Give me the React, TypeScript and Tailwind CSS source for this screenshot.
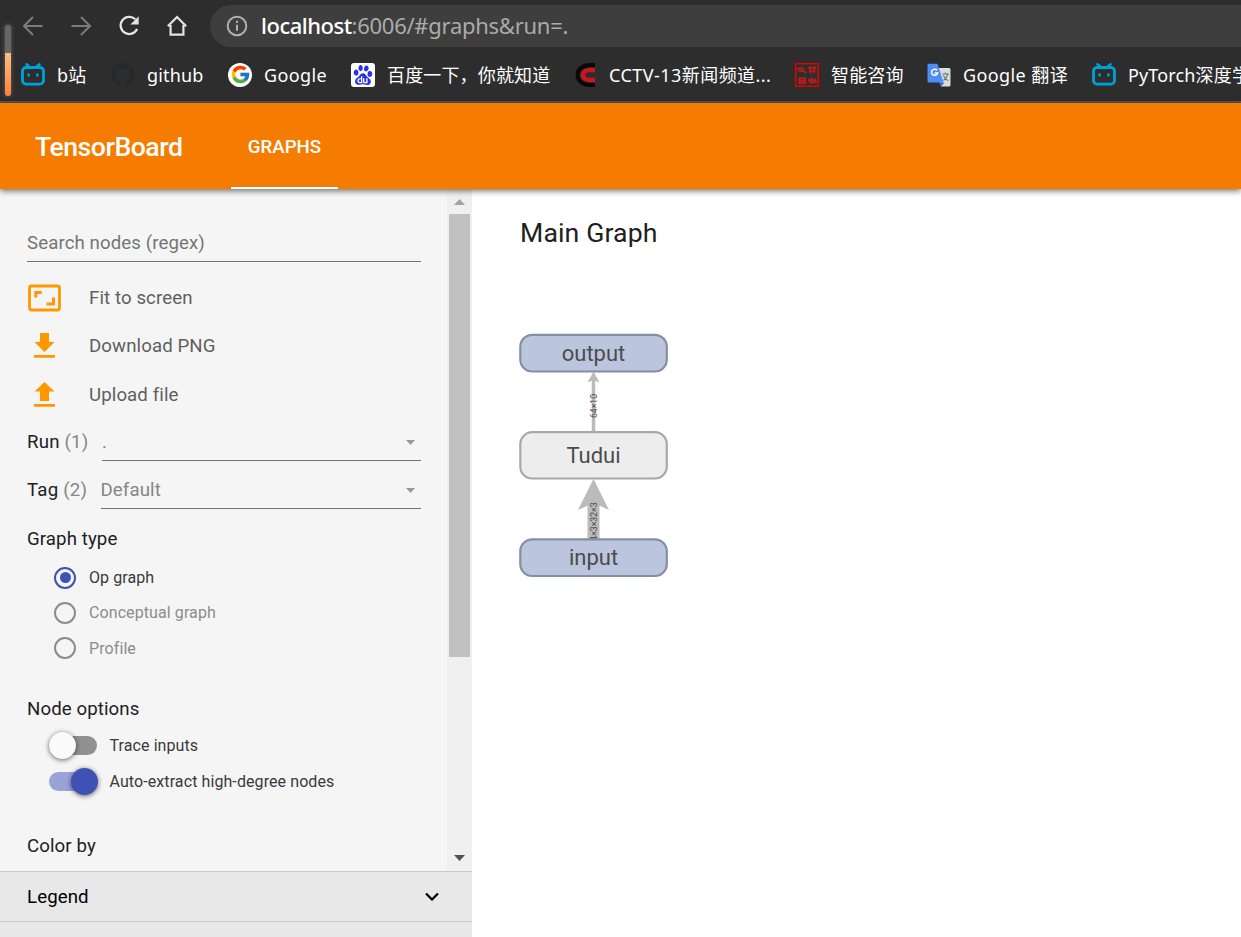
import React from 'react';
import { FaGithub } from 'react-icons/fa';
import { FcGoogle } from 'react-icons/fc';
import { SiBaidu } from 'react-icons/si';

function BilibiliIcon() {
  return (
    <svg width="24" height="24" viewBox="0 0 24 24" fill="none" stroke="#00a1d6" strokeWidth="2.800" strokeLinecap="round">
      <rect x="1.500" y="4.500" width="21" height="16.600" rx="3.600" />
      <path d="M5.500 1.300l3.500 3M18.500 1.300l-3.500 3M7.600 11.400v1.200M16.400 11.400v1.200" strokeWidth="2.500" />
    </svg>
  );
}

function CctvIcon() {
  return (
    <svg width="24" height="24" viewBox="0 0 24 24" fill="none">
      <path d="M21 2.200C12 1 3.600 4 3.600 12s8.400 11 17.400 9.800" stroke="#080808" strokeWidth="4" />
      <path d="M21 7.200h-5.500C11.500 7.200 9 9 9 12s2.500 4.800 6.500 4.800H21" stroke="#d4141c" strokeWidth="4.200" />
    </svg>
  );
}

function SealIcon() {
  return (
    <svg width="24" height="24" viewBox="0 0 24 24" fill="none">
      <rect x=".7" y=".7" width="22.600" height="22.600" stroke="#e60000" strokeWidth="1.400" />
      <g stroke="#d01818" strokeWidth="1.900" opacity=".8">
        <path d="M4 4.500l-1.500 2.500M4 5.500h5M3.500 8h5.500l2.200 2.500M13 5h8.500M15 3v4M19.500 3v4M14 8h6.500M16 8v2.800M19.500 8v2.500" />
        <path d="M3.500 15.300h7.500M3.500 18h7.500M4.200 14.500v6M7.200 14.500v6M10.300 14.500v6M3.500 20.200h7.500M12.800 17h9M14 19.300h8M17 14.500v6.300M14.800 15.500v4M20 15.500v4" />
      </g>
    </svg>
  );
}

function TranslateIcon() {
  return (
    <svg width="24" height="24" viewBox="0 0 24 24" fill="none">
      <path d="M10 5h12a1.500 1.500 0 0 1 1.500 1.500v15.500a1.500 1.500 0 0 1-1.500 1.500h-8z" fill="#dcdcdc" />
      <path d="M12 19.500h5.500L14 23.500z" fill="#3367d6" />
      <path d="M2 .8h8.500L16.500 19.500H2A1.500 1.500 0 0 1 .5 18V2.300A1.500 1.500 0 0 1 2 .8z" fill="#4f8df5" />
      <path d="M10 7.200a3.100 3.100 0 1 0 .7 2.700H7.600" stroke="#fff" strokeWidth="1.500" />
      <path d="M15 11h7M18.500 9.500V11M20.800 11c-.8 3-2.300 5-4.300 6.500M16.300 12.500c.8 2 2.500 4 4.900 5.300" stroke="#607988" strokeWidth="1.100" />
    </svg>
  );
}

function Bookmark({ icon, label, className }: { icon: React.ReactNode; label: string; className: string }) {
  return (
    <div className={`flex shrink-0 items-center gap-3 ${className}`}>
      <span className="flex size-6 shrink-0 items-center justify-center">{icon}</span>
      <span className="whitespace-nowrap leading-6">{label}</span>
    </div>
  );
}

function BrowserChrome() {
  return (
    <div className="relative h-[103px] border-b-2 border-[#555] bg-[#2d2d2d] font-['Noto_Sans','Noto_Sans_CJK_SC',sans-serif] text-white">
      <div className="absolute left-[5px] top-[25px] flex h-[71px] w-[6px] flex-col overflow-hidden rounded-full bg-[#666] shadow-[0_0_4px_#666]">
        <div className="mt-[28px] grow bg-linear-to-b from-[#fdc080] to-[#ff7f38]" />
      </div>
      <div className="flex h-[52px] items-center pl-[21px]">
        <svg width="24" height="24" viewBox="0 0 24 24" fill="none" stroke="#7c7c7c" strokeWidth="2">
          <path d="M21.500 12H3.500M12 3L3 12l9 9" />
        </svg>
        <svg className="ml-6" width="24" height="24" viewBox="0 0 24 24" fill="none" stroke="#7c7c7c" strokeWidth="2">
          <path d="M2.500 12h18M12 3l9 9-9 9" />
        </svg>
        <svg className="ml-6" width="24" height="24" viewBox="0 0 24 24" fill="none" stroke="#e4e4e4" strokeWidth="2.300">
          <path d="M18.300 5.300A8.600 8.600 0 1 0 20.100 15" />
          <path d="M21.700 2.200v8.300h-8.300z" fill="#e4e4e4" stroke="none" />
        </svg>
        <svg className="ml-6" width="24" height="24" viewBox="0 0 24 24" fill="none" stroke="#e4e4e4" strokeWidth="2.200">
          <path d="M2.800 12.300L12 3l9.200 9.300M5.600 11v9.600h12.800V11" />
        </svg>
        <div className="ml-[21px] flex h-[42px] grow items-center rounded-l-full bg-[#3e3e3e] pl-4">
          <svg width="22" height="22" viewBox="0 0 22 22" fill="none" stroke="#b0b0b0" strokeWidth="2">
            <circle cx="11" cy="11" r="9.300" />
            <path d="M11 9.800v6M11 5.800v2.300" />
          </svg>
          <span className="ml-[13px] pb-[2px] text-[22px] leading-none tracking-[-0.27px] text-[#ababab]">
            <span className="font-medium tracking-[-0.5px] text-white">localhost</span>:6006/#graphs&amp;run=.
          </span>
        </div>
      </div>
      <div className="flex h-[45px] items-center overflow-hidden pl-[21px] text-[18px] tracking-[0.15px]">
        <Bookmark className="w-[90px]" icon={<BilibiliIcon />} label="b站" />
        <Bookmark className="w-[117px]" icon={<FaGithub size={24} color="#24292e" />} label="github" />
        <Bookmark
          className="w-[123px] tracking-[0.4px]"
          icon={
            <span className="flex size-6 items-center justify-center rounded-full bg-white">
              <FcGoogle size={21} />
            </span>
          }
          label="Google"
        />
        <Bookmark
          className="w-[223px]"
          icon={
            <span className="flex size-6 items-center justify-center rounded-[3px] bg-white">
              <SiBaidu size={20} color="#2932e1" />
            </span>
          }
          label="百度一下，你就知道"
        />
        <Bookmark className="w-[221px] gap-[11px] tracking-[0.45px]" icon={<CctvIcon />} label="CCTV-13新闻频道..." />
        <Bookmark className="w-[132px]" icon={<SealIcon />} label="智能咨询" />
        <Bookmark className="w-[165px] tracking-[0.4px]" icon={<TranslateIcon />} label="Google 翻译" />
        <Bookmark className="w-[200px]" icon={<BilibiliIcon />} label="PyTorch深度学习" />
      </div>
    </div>
  );
}

function Toolbar() {
  return (
    <header className="relative z-10 flex h-[86px] bg-[#f57c00] text-white shadow-[0_2px_6px_rgba(0,0,0,0.55)]">
      <h1 className="ml-[35px] flex w-[196px] items-center pt-[2px] text-[26.67px] font-medium tracking-[-0.5px]">TensorBoard</h1>
      <div className="flex w-[107px] items-center justify-center border-b-2 border-white pt-[3px] text-[18.67px] font-medium">GRAPHS</div>
    </header>
  );
}

function ActionRow({ icon, label, className }: { icon: React.ReactNode; label: string; className: string }) {
  return (
    <div className={`flex items-center text-[18.67px] text-[#5f5f5f] ${className}`}>
      <span className="flex w-[62px]">{icon}</span>
      {label}
    </div>
  );
}

function Select({ value, className }: { value: string; className: string }) {
  return (
    <div className={`flex grow items-center justify-between self-start border-b border-[#737373] pr-[6px] text-[#868686] ${className}`}>
      <span>{value}</span>
      <svg width="9" height="5" viewBox="0 0 9 5">
        <path d="M0 0h9L4.500 5z" fill="#999" />
      </svg>
    </div>
  );
}

function Radio({ label, checked }: { label: string; checked?: boolean }) {
  return (
    <div className={`flex h-[35.33px] items-center pl-[27px] text-[16px] ${checked ? 'text-[#3a3a3a]' : 'text-[#8c8c8c]'}`}>
      <span className={`mr-[13px] flex size-[22px] items-center justify-center rounded-full border-2 ${checked ? 'border-[#3f51b5]' : 'border-[#8c8c8c]'}`}>
        {checked && <span className="size-[11px] rounded-full bg-[#3f51b5]" />}
      </span>
      <span className={checked ? '' : 'pt-[1px]'}>{label}</span>
    </div>
  );
}

function Toggle({ label, on }: { label: string; on?: boolean }) {
  return (
    <div className="flex h-9 items-center pl-[22px] text-[16px] text-[#3a3a3a]">
      <span className={`mr-[12.5px] flex h-[19px] w-12 items-center rounded-full ${on ? 'justify-end bg-[#9aa3d8]' : 'bg-[#919191]'}`}>
        <span
          className={`size-[27px] shrink-0 rounded-full shadow-[0_1px_5px_rgba(0,0,0,0.6)] ${on ? '-mr-[1px] bg-[#3f51b5]' : 'bg-[#fafafa]'}`}
        />
      </span>
      {label}
    </div>
  );
}

function Sidebar() {
  return (
    <aside className="flex w-[472px] flex-col bg-[#f5f5f5]">
      <div className="flex h-[682px]">
        <div className="flex w-[447px] flex-col pl-[27px] pr-[26px] text-[18.67px] tracking-[0.09px] text-[#212121]">
          <div className="flex h-[73px] items-end border-b border-[#737373] pb-[4px] text-[#757575]">Search nodes (regex)</div>
          <div className="h-[11px]" />
          <ActionRow
            className="h-12 pt-[1px]"
            label="Fit to screen"
            icon={
              <svg width="34" height="28" viewBox="0 0 34 28" fill="none" stroke="#ff9800">
                <rect x="2.500" y="2" width="30" height="24" rx="2" strokeWidth="2.800" />
                <path d="M8.800 13.500V8.500h6M26.500 13.500V20h-7" strokeWidth="3" />
              </svg>
            }
          />
          <ActionRow
            className="h-[49px]"
            label="Download PNG"
            icon={
              <svg className="ml-[7px]" width="21" height="26" viewBox="0 0 21 26" fill="#ff9800">
                <path d="M6 0h9v9h5.500L10.500 19 .500 9H6zM0 22h21v2.700H0z" />
              </svg>
            }
          />
          <ActionRow
            className="h-12 pt-[1px]"
            label="Upload file"
            icon={
              <svg className="ml-[7px]" width="21" height="26" viewBox="0 0 21 26" fill="#ff9800">
                <path d="M6 19h9v-9.500h5.500L10.500 0 .500 9.500H6zM0 22h21v2.700H0z" />
              </svg>
            }
          />
          <div className="flex h-[46px] items-center pt-[2px]">
            <span className="w-[75px] shrink-0 tracking-[0.2px]">
              Run <span className="text-[#868686]">(1)</span>
            </span>
            <Select value="." className="-mt-[2px] h-[43px] pt-[6px]" />
          </div>
          <div className="flex h-[50px] items-center pt-[1px]">
            <span className="w-[73.5px] shrink-0 tracking-[0.2px]">
              Tag <span className="text-[#868686]">(2)</span>
            </span>
            <Select value="Default" className="-mt-[1px] h-[45px] pt-[8px]" />
          </div>
          <div className="flex h-[46px] items-center pt-[4px]">Graph type</div>
          <Radio label="Op graph" checked />
          <Radio label="Conceptual graph" />
          <Radio label="Profile" />
          <div className="mt-[25px] flex h-9 items-center">Node options</div>
          <div className="h-[1px]" />
          <Toggle label="Trace inputs" />
          <Toggle label="Auto-extract high-degree nodes" on />
          <div className="mt-7 flex h-9 items-center">Color by</div>
        </div>
        <div className="flex w-[25px] flex-col items-center bg-[#f0f0f0]">
          <svg className="mt-[10px] shrink-0" width="11" height="6" viewBox="0 0 11 6">
            <path d="M0 6h11L5.500 0z" fill="#a3a3a3" />
          </svg>
          <div className="mt-[9px] h-[443px] w-[21px] bg-[#c1c1c1]" />
          <svg className="mb-[10px] mt-auto shrink-0" width="11" height="6" viewBox="0 0 11 6">
            <path d="M0 0h11L5.500 6z" fill="#505050" />
          </svg>
        </div>
      </div>
      <div className="flex h-[51px] items-center justify-between border-y border-[#c9c9c9] bg-[#e8e8e8] pl-[27px] pr-[33px] text-[18.67px] tracking-[0.1px] text-black">
        Legend
        <svg width="14" height="9" viewBox="0 0 14 9" fill="none" stroke="#000" strokeWidth="2.200">
          <path d="M1 1.500l6 6 6-6" />
        </svg>
      </div>
      <div className="grow bg-[#e8e8e8]" />
    </aside>
  );
}

function GraphCanvas() {
  return (
    <svg width="200" height="260" viewBox="510 325 200 260" className="font-['Roboto',sans-serif]">
      <path d="M593.500 432V380" stroke="#bbb" strokeWidth="3.500" />
      <path d="M593.500 371.500l6 11-6-2.500-6 2.500z" fill="#bbb" />
      <path d="M593.500 540V500" stroke="#bbb" strokeWidth="12" />
      <path d="M593.500 479l15.500 31-15.500-7-15.500 7z" fill="#bbb" />
      <g fontSize="8.700" fill="#4a4a4a" textAnchor="middle">
        <text transform="translate(597 406) rotate(-90)">64×10</text>
        <text transform="translate(597 524) rotate(-90)">64×3×32×3</text>
      </g>
      <rect x="520.300" y="334.800" width="146.500" height="36.700" rx="12" fill="#bbc6de" stroke="#848fa3" strokeWidth="2.200" />
      <rect x="520.300" y="432.200" width="146.500" height="46.300" rx="12" fill="#ededed" stroke="#a8a8a8" strokeWidth="2.200" />
      <rect x="520.300" y="539.300" width="146.500" height="36.700" rx="12" fill="#bbc6de" stroke="#848fa3" strokeWidth="2.200" />
      <g fontSize="22" fill="#4c4c4c" textAnchor="middle">
        <text x="593.500" y="361">output</text>
        <text x="593.500" y="463">Tudui</text>
        <text x="593.500" y="565">input</text>
      </g>
    </svg>
  );
}

export default function App() {
  return (
    <div className="flex h-[937px] w-[1241px] flex-col overflow-hidden bg-white font-['Roboto',sans-serif]">
      <BrowserChrome />
      <Toolbar />
      <div className="flex grow">
        <Sidebar />
        <main className="grow">
          <h2 className="ml-[48px] mt-[26px] h-[36px] text-[26.67px] leading-[36px] tracking-[0.12px] text-[#212121]">Main Graph</h2>
          <div className="ml-[38px] mt-[74px]">
            <GraphCanvas />
          </div>
        </main>
      </div>
    </div>
  );
}
